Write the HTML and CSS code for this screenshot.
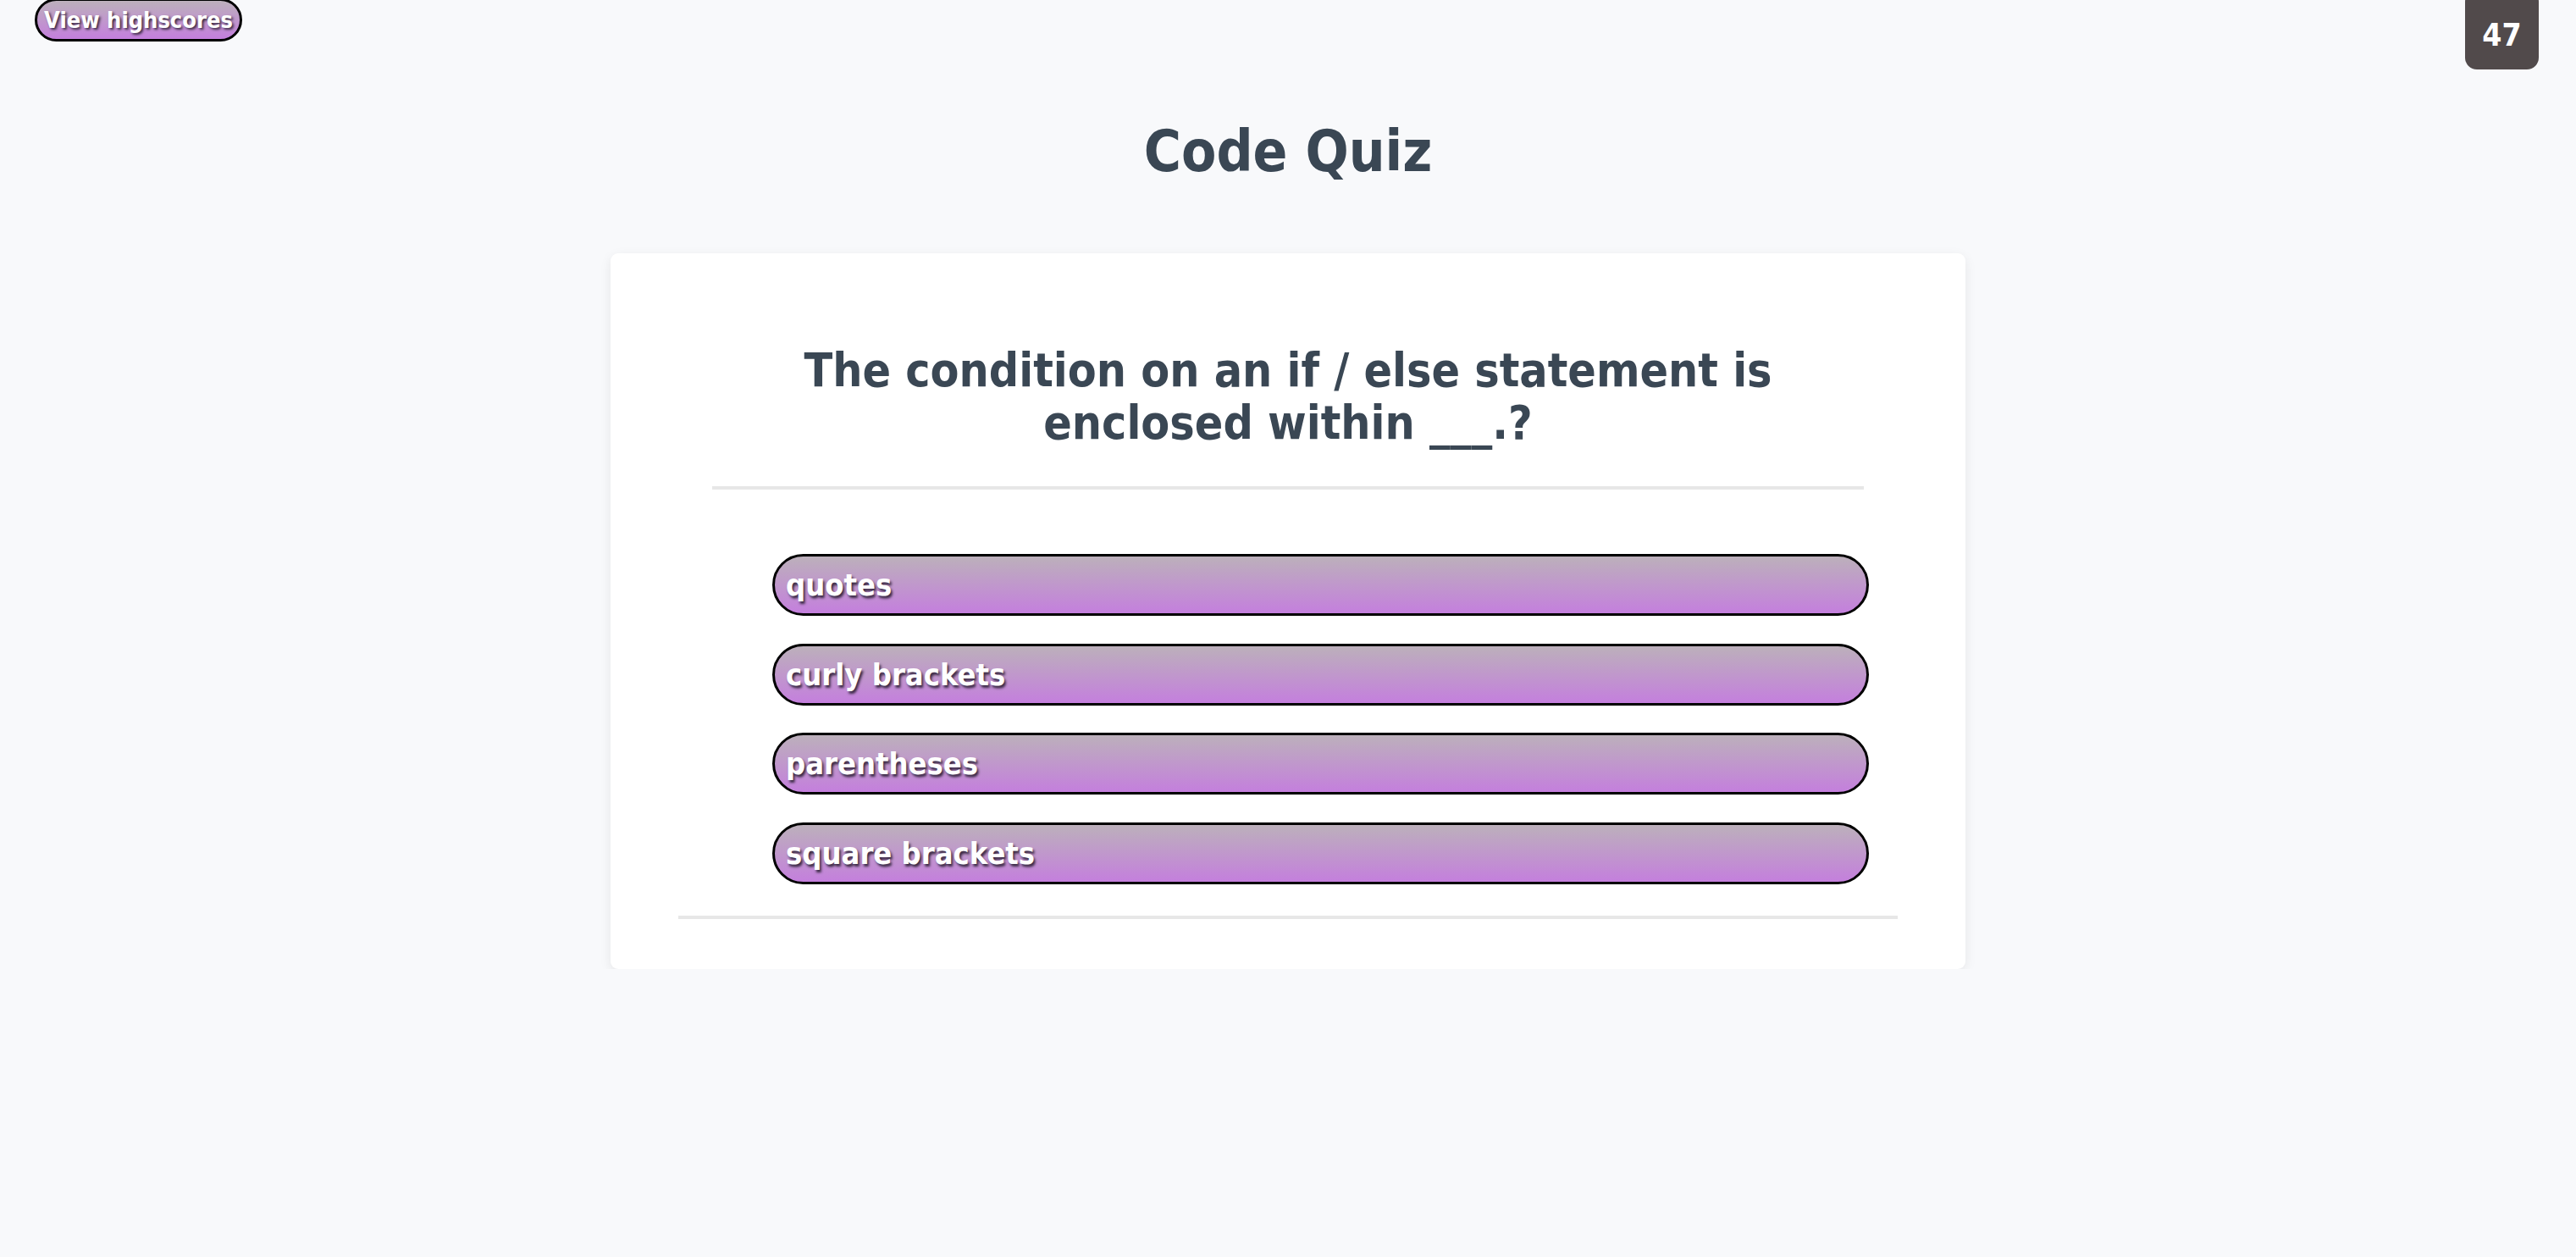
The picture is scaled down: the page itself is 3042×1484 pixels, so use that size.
FILE: index.html
```html
<!DOCTYPE html>
<html lang="en">
<head>
<meta charset="utf-8">
<title>Code Quiz</title>
<link rel="stylesheet" href="styles.css">
</head>
<body>
<header class="topbar">
  <button class="highscores" type="button">View highscores</button>
  <div class="timer">47</div>
</header>
<h1 class="title">Code Quiz</h1>
<main class="card">
  <h2 class="question">The condition on an if / else statement is enclosed within ___.?</h2>
  <hr class="rule rule-top">
  <ul class="answers">
    <li><button class="answer" type="button">quotes</button></li>
    <li><button class="answer" type="button">curly brackets</button></li>
    <li><button class="answer" type="button">parentheses</button></li>
    <li><button class="answer" type="button">square brackets</button></li>
  </ul>
  <hr class="rule rule-bottom">
</main>
</body>
</html>
```
FILE: styles.css
```css
* { box-sizing: border-box; }

body {
  margin: 0;
  background: #f8f9fb;
  font-family: "DejaVu Sans Condensed", "DejaVu Sans", sans-serif;
  font-stretch: condensed;
  font-weight: bold;
  color: #3a4754;
}

.topbar {
  display: flex;
  justify-content: space-between;
  align-items: flex-start;
  height: 82px;
  padding: 0 44px 0 41px;
}

.highscores {
  margin-top: -2px;
  width: 245px;
  height: 51px;
  padding: 0;
  border: 3px solid #000;
  border-radius: 26px;
  background: linear-gradient(#bcb0bb, #c47fdd);
  color: #fff;
  font-family: inherit;
  font-stretch: condensed;
  font-weight: bold;
  font-size: 27px;
  text-shadow: 2px 2px 3px #3a2a44;
  cursor: pointer;
}

.timer {
  margin-top: -12px;
  width: 87px;
  height: 94px;
  padding-top: 12px;
  display: flex;
  align-items: center;
  justify-content: center;
  background: #514a4b;
  border-radius: 14px;
  color: #fff;
  font-size: 37px;
}

.title {
  margin: 58px 0 0;
  text-align: center;
  font-size: 67px;
  line-height: normal;
  font-weight: bold;
}

.card {
  width: 1600px;
  margin: 81px auto 0;
  padding: 107px 80px 59px;
  background: #fff;
  border-radius: 9px;
  box-shadow: 0 4px 14px rgba(0, 0, 0, 0.08);
}

.question {
  margin: 0 40px;
  text-align: center;
  font-size: 55px;
  line-height: 62px;
  font-weight: bold;
}

.rule {
  border: none;
  height: 4px;
  background: #e7e7e7;
  margin: 0;
}

.rule-top {
  margin: 44px 40px 0;
}

.answers {
  list-style: none;
  margin: 76px 34px 0 111px;
  padding: 0;
  display: flex;
  flex-direction: column;
  gap: 32.5px;
}

.answer {
  display: block;
  width: 100%;
  height: 73px;
  padding: 0 0 0 13px;
  border: 3px solid #000;
  border-radius: 37px;
  background: linear-gradient(#bcb0bb, #c47fdd);
  color: #fff;
  text-align: left;
  font-family: inherit;
  font-stretch: condensed;
  font-weight: bold;
  font-size: 36px;
  text-shadow: 2px 3px 3px #3a2a44;
  cursor: pointer;
}

.rule-bottom {
  margin-top: 37px;
}
```
